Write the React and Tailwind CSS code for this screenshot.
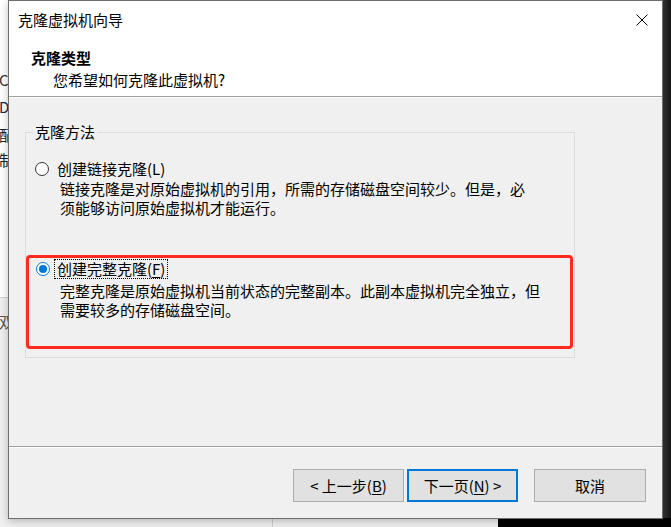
// 克隆虚拟机向导 — 第二步：克隆类型
export default function App() {
  return (
    <div className="relative w-[671px] h-[527px] overflow-hidden bg-[#f0f0f0] font-['Noto_Sans_CJK_SC','Microsoft_YaHei',sans-serif] text-black">
      {/* fenêtre d'arrière-plan, à moitié cachée */}
      <div className="absolute left-0 top-0 w-[8px] h-[298px] bg-white border-b border-[#d4d4d4]" />
      <span className="absolute left-[-1px] top-[70px] text-[15px] leading-[20px] text-[#333]">C</span>
      <span className="absolute left-[-1px] top-[97px] text-[15px] leading-[20px] text-[#1d2a4a]">D</span>
      <span className="absolute left-[-1px] top-[125px] text-[15px] leading-[20px] text-[#222]">配</span>
      <span className="absolute left-[-1px] top-[150px] text-[15px] leading-[20px] text-[#222]">制</span>
      <span className="absolute left-[-1px] top-[312px] text-[15px] leading-[20px] text-[#555]">双</span>
      <div className="absolute right-0 top-0 w-[9px] h-full bg-linear-to-r from-[#3c3c3c] to-[#151515]" />
      <div className="absolute left-[498px] bottom-0 w-[173px] h-[9px] bg-black" />
      <div className="absolute left-[272px] bottom-0 w-px h-[9px] bg-[#cfcfcf]" />

      <Wizard />

      {/* annotation rouge */}
      <div className="absolute left-[26px] top-[255px] w-[547px] h-[94px] border-[3px] border-[#ff2a1f] rounded-[4px]" />
    </div>
  )
}

function Wizard() {
  return (
    <div className="absolute left-[8px] top-0 w-[655px] h-[519px] border border-[#6e6e6e] bg-[#f0f0f0] flex flex-col shadow-[0_2px_8px_rgba(0,0,0,0.25)]">
      {/* En-tête blanc */}
      <div className="h-[96px] bg-white border-b border-[#a0a0a0] flex flex-col">
        <div className="h-[37px] flex items-center justify-between pl-[9px] pr-[14px]">
          <span className="text-[15px] leading-[20px]">克隆虚拟机向导</span>
          <svg width="12" height="12" viewBox="0 0 12 12" className="shrink-0">
            <path d="M0.5 0.5 L11.5 11.5 M11.5 0.5 L0.5 11.5" stroke="#000" strokeWidth="1" fill="none" />
          </svg>
        </div>
        <div className="mt-[10px] pl-[22px] text-[15px] leading-[20px] font-bold">克隆类型</div>
        <div className="mt-[2px] pl-[44px] text-[15px] leading-[20px]">您希望如何克隆此虚拟机?</div>
      </div>

      {/* Corps */}
      <div className="flex-1 border-t border-white pt-[34px] pl-[16px]">
        <div className="relative w-[550px] h-[226px] border border-[#dcdcdc]">
          <span className="absolute left-[7px] -top-[11px] px-[2px] bg-[#f0f0f0] text-[15px] leading-[20px]">克隆方法</span>

          {/* Option 1 */}
          <div className="pt-[26px] pl-[9px]">
            <div className="flex items-center h-[20px]">
              <span className="w-[14px] h-[14px] rounded-full border border-[#333] bg-white shrink-0" />
              <span className="ml-[8px] text-[15px] leading-[20px]">创建链接克隆(L)</span>
            </div>
            <div className="ml-[25px] text-[15px] leading-[19px]">
              <div>链接克隆是对原始虚拟机的引用，所需的存储磁盘空间较少。但是，必</div>
              <div>须能够访问原始虚拟机才能运行。</div>
            </div>
          </div>

          {/* Option 2 */}
          <div className="mt-[42px] pl-[10px]">
            <div className="flex items-center h-[20px]">
              <span className="w-[14px] h-[14px] rounded-full border border-[#0078d7] bg-white shrink-0 flex items-center justify-center">
                <span className="w-[8px] h-[8px] rounded-full bg-[#0078d7]" />
              </span>
              <span className="ml-[4px] border border-dotted border-black px-[2px] text-[15px] leading-[18px]">
                创建完整克隆(<span className="underline underline-offset-2">F</span>)
              </span>
            </div>
            <div className="mt-[2px] ml-[24px] text-[15px] leading-[19px]">
              <div>完整克隆是原始虚拟机当前状态的完整副本。此副本虚拟机完全独立，但</div>
              <div>需要较多的存储磁盘空间。</div>
            </div>
          </div>
        </div>
      </div>

      {/* Pied */}
      <div className="h-px bg-[#a0a0a0]" />
      <div className="h-px bg-white" />
      <div className="h-[70px] pt-[21px] pr-[16px] flex justify-end items-start">
        <button className="w-[111px] h-[33px] bg-[#e1e1e1] border border-[#adadad] text-[15px] leading-[20px]">
          &lt; 上一步(<span className="underline underline-offset-2">B</span>)
        </button>
        <button className="ml-[3px] w-[111px] h-[33px] bg-[#e1e1e1] border-2 border-[#0078d7] text-[15px] leading-[20px]">
          下一页(<span className="underline underline-offset-2">N</span>) &gt;
        </button>
        <button className="ml-[16px] w-[112px] h-[33px] bg-[#e1e1e1] border border-[#adadad] text-[15px] leading-[20px]">
          取消
        </button>
      </div>
    </div>
  )
}
